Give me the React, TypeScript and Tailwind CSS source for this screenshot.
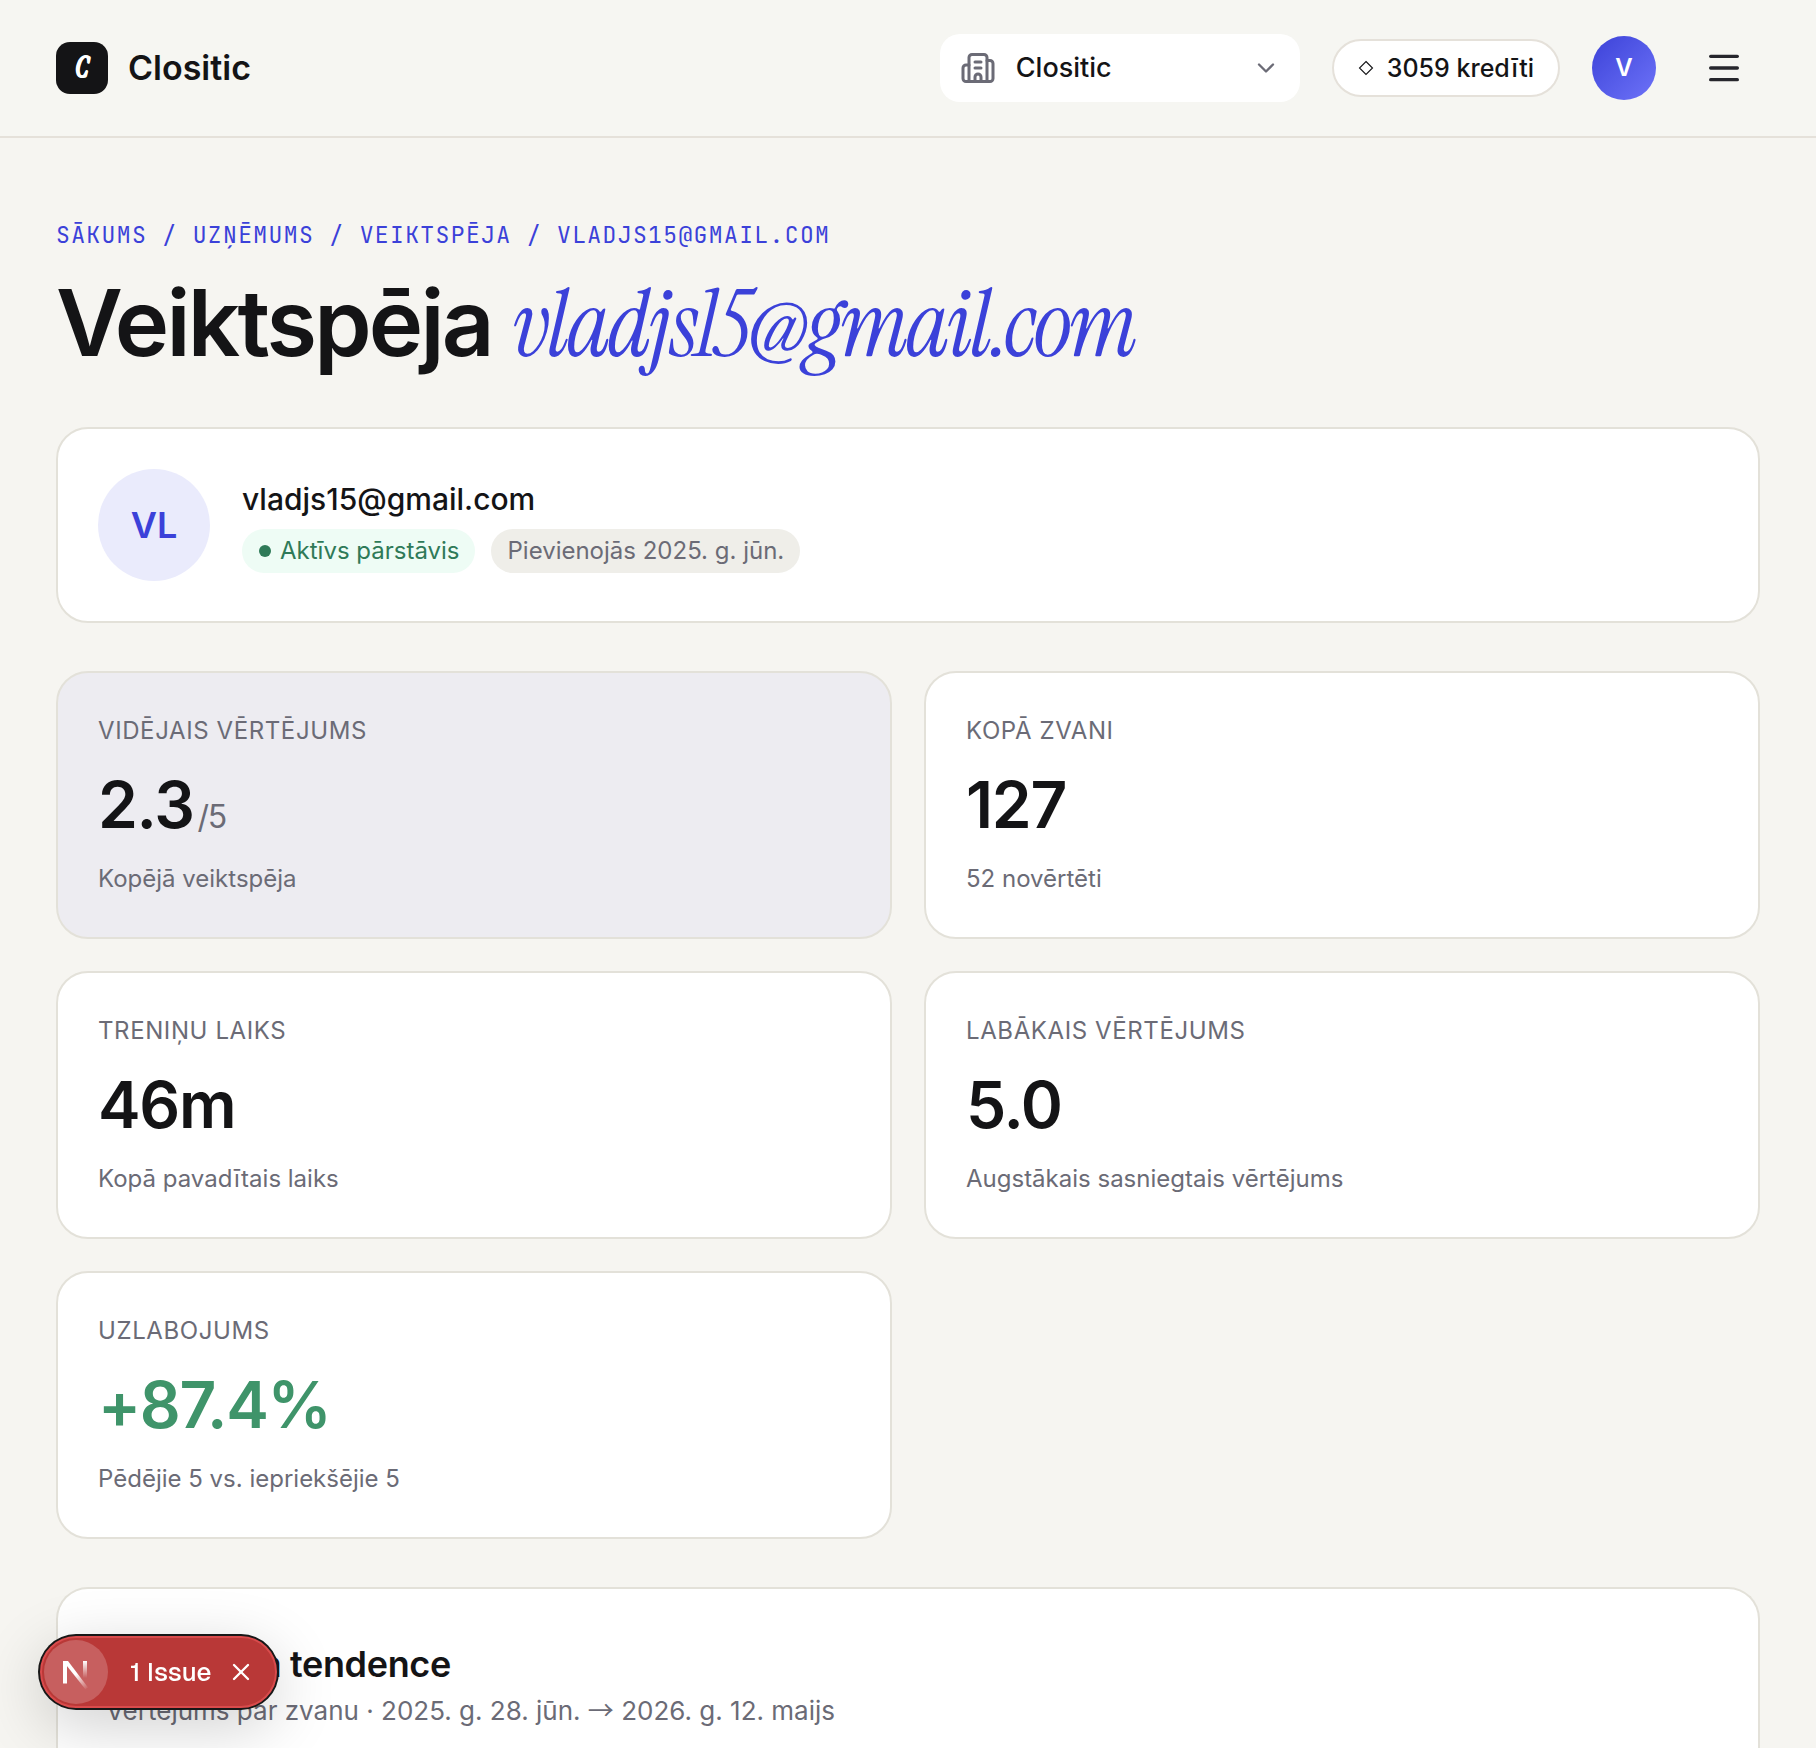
import { Building2, ChevronDown, Menu, X } from "lucide-react";

interface Stat {
  label: string;
  value: string;
  suffix?: string;
  note: string;
  highlighted?: boolean;
  positive?: boolean;
}

const stats: Stat[] = [
  {
    label: "Vidējais vērtējums",
    value: "2.3",
    suffix: "/5",
    note: "Kopējā veiktspēja",
    highlighted: true,
  },
  { label: "Kopā zvani", value: "127", note: "52 novērtēti" },
  { label: "Treniņu laiks", value: "46m", note: "Kopā pavadītais laiks" },
  {
    label: "Labākais vērtējums",
    value: "5.0",
    note: "Augstākais sasniegtais vērtējums",
  },
  {
    label: "Uzlabojums",
    value: "+87.4%",
    note: "Pēdējie 5 vs. iepriekšējie 5",
    positive: true,
  },
];

const crumbs = [
  { label: "Sākums", href: "#home" },
  { label: "Uzņēmums", href: "#company" },
  { label: "Veiktspēja", href: "#performance" },
];

function Header() {
  return (
    <header className="flex items-center justify-between border-b-2 border-[#e5e1da] bg-[#f6f6f2] px-14 py-[34px]">
      <a href="#home" className="flex items-center gap-5">
        <span className="flex size-[52px] items-center justify-center rounded-[14px] bg-[#141416] font-['Instrument_Serif','Liberation_Serif',serif] text-[28px] font-bold italic leading-none text-white [-webkit-text-stroke:1px_white]">
          C
        </span>
        <span className="text-[34px] font-semibold leading-[52px]">
          Clositic
        </span>
      </a>

      <div className="flex items-center gap-8">
        <label className="flex h-[68px] w-[360px] items-center gap-5 rounded-[20px] bg-white px-5 text-[#6b6b76]">
          <Building2 size={36} />
          <select
            aria-label="Uzņēmums"
            className="min-w-0 flex-1 appearance-none bg-transparent text-[27px] font-medium leading-10 text-[#141416] outline-none"
          >
            <option>Clositic</option>
          </select>
          <ChevronDown size={28} />
        </label>

        <a
          href="#credits"
          className="flex h-[58px] items-center gap-[13px] rounded-full border-2 border-[#e5e1da] bg-white px-6 text-[25px] font-medium leading-9"
        >
          <svg width="16" height="16" viewBox="0 0 16 16" fill="none">
            <path d="M8 1.5 14.5 8 8 14.5 1.5 8Z" stroke="#141416" strokeWidth="1.1" />
          </svg>
          3059 kredīti
        </a>

        <button
          type="button"
          className="flex size-16 items-center justify-center rounded-full bg-linear-135 from-[#3d41d8] to-[#6e72f8] text-2xl font-semibold text-white"
        >
          V
        </button>

        <button
          type="button"
          aria-label="Izvēlne"
          className="flex h-[68px] w-[72px] items-center justify-center text-[#26262c]"
        >
          <Menu size={40} />
        </button>
      </div>
    </header>
  );
}

function ProfileCard() {
  return (
    <section className="mt-[52px] flex items-center gap-8 rounded-[32px] border-2 border-[#e3e1d9] bg-white p-10">
      <div className="flex size-28 items-center justify-center rounded-full bg-[#eaebfc] text-4xl font-semibold text-[#3b41d9]">
        VL
      </div>
      <div>
        <p className="text-[30px] font-medium leading-[44px]">
          vladjs15@gmail.com
        </p>
        <div className="mt-2 flex gap-4 text-2xl leading-[44px]">
          <span className="flex items-center gap-2 rounded-full bg-[#eefcf5] px-4 text-[#2f7a58]">
            <span className="mx-px size-3 rounded-full bg-[#2f7a58]" />
            Aktīvs pārstāvis
          </span>
          <span className="rounded-full bg-[#efeee9] px-4 text-[#6b6b76]">
            Pievienojās 2025. g. jūn.
          </span>
        </div>
      </div>
    </section>
  );
}

function StatCard({ stat }: { stat: Stat }) {
  return (
    <div
      className={`rounded-[32px] border-2 border-[#e3e1d9] p-10 ${
        stat.highlighted ? "bg-[#edecf1]" : "bg-white"
      }`}
    >
      <p className="text-2xl leading-9 tracking-wide text-[#6b6b76] uppercase">
        {stat.label}
      </p>
      <p
        className={`my-6 text-[64px] font-semibold leading-16 tracking-[-0.02em] ${
          stat.positive ? "text-[#3f946a]" : "text-[#141416]"
        }`}
      >
        {stat.value}
        {stat.suffix && (
          <span className="ml-1 text-[32px] font-normal leading-none text-[#6b6b76]">
            {stat.suffix}
          </span>
        )}
      </p>
      <p className="text-2xl leading-9 text-[#6b6b76]">{stat.note}</p>
    </div>
  );
}

function NextLogo() {
  return (
    <svg width="64" height="64" viewBox="0 0 64 64" fill="none">
      <defs>
        <linearGradient id="diagonal" x1="32" y1="34" x2="44" y2="49" gradientUnits="userSpaceOnUse">
          <stop stopColor="#fff" />
          <stop offset="1" stopColor="#fff" stopOpacity="0" />
        </linearGradient>
        <linearGradient id="stem" x1="41" y1="21" x2="41" y2="38" gradientUnits="userSpaceOnUse">
          <stop stopColor="#fff" />
          <stop offset="1" stopColor="#fff" stopOpacity="0" />
        </linearGradient>
      </defs>
      <path d="M21 21v22.5" stroke="#fff" strokeWidth="4" />
      <path d="M19 21h5l20 26.4-2.6 1.8Z" fill="url(#diagonal)" />
      <path d="M41 21v17" stroke="url(#stem)" strokeWidth="4" />
    </svg>
  );
}

function IssueBadge() {
  return (
    <div className="fixed bottom-10 left-10 flex items-center rounded-full border-2 border-[#d94b4c] bg-[#b93837] p-0.5 pr-5 font-[Geist,Inter,sans-serif] text-white shadow-[0_0_0_2px_#171717,0_16px_64px_rgba(0,0,0,0.2)]">
      <button type="button" aria-label="Next.js" className="rounded-full bg-white/20">
        <NextLogo />
      </button>
      <button type="button" className="ml-[22px] text-[26px] font-medium">
        1 Issue
      </button>
      <button type="button" aria-label="Aizvērt" className="ml-4">
        <X size={28} />
      </button>
    </div>
  );
}

export default function App() {
  return (
    <div className="flex min-h-screen flex-col bg-[#f6f5f1] font-[Inter,sans-serif] text-[#141416]">
      <Header />

      <main className="flex flex-1 flex-col px-14 pt-[81px]">
        <nav className="flex text-[23px] leading-8 tracking-[0.06em] whitespace-pre text-[#3b41d9] uppercase font-['JetBrains_Mono','Liberation_Mono',monospace]">
          {crumbs.map((crumb) => (
            <span key={crumb.href}>
              <a href={crumb.href}>{crumb.label}</a>
              {" / "}
            </span>
          ))}
          <span>vladjs15@gmail.com</span>
        </nav>

        <h1 className="mt-5 text-[92px] font-semibold leading-[104px] tracking-[-0.03em]">
          Veiktspēja{" "}
          <em className="font-['Instrument_Serif','Liberation_Serif',serif] font-normal leading-none text-[#3b41d9]">
            vladjs15@gmail.com
          </em>
        </h1>

        <ProfileCard />

        <section className="mt-12 grid grid-cols-2 gap-8">
          {stats.map((stat) => (
            <StatCard key={stat.label} stat={stat} />
          ))}
        </section>

        <section className="mt-12 flex-1 rounded-t-[32px] border-2 border-b-0 border-[#e3e1d9] bg-white px-12 pt-12">
          <h2 className="text-4xl leading-[54px] font-semibold tracking-[-0.01em]">
            Vērtējuma tendence
          </h2>
          <p className="text-[26px] leading-[39px] text-[#6b6b76]">
            Vērtējums par zvanu · 2025. g. 28. jūn.{" "}
            <span className="font-['Noto_Sans_CJK_JP',sans-serif] leading-none">→</span>{" "}
            2026. g. 12. maijs
          </p>
        </section>
      </main>

      <IssueBadge />
    </div>
  );
}
